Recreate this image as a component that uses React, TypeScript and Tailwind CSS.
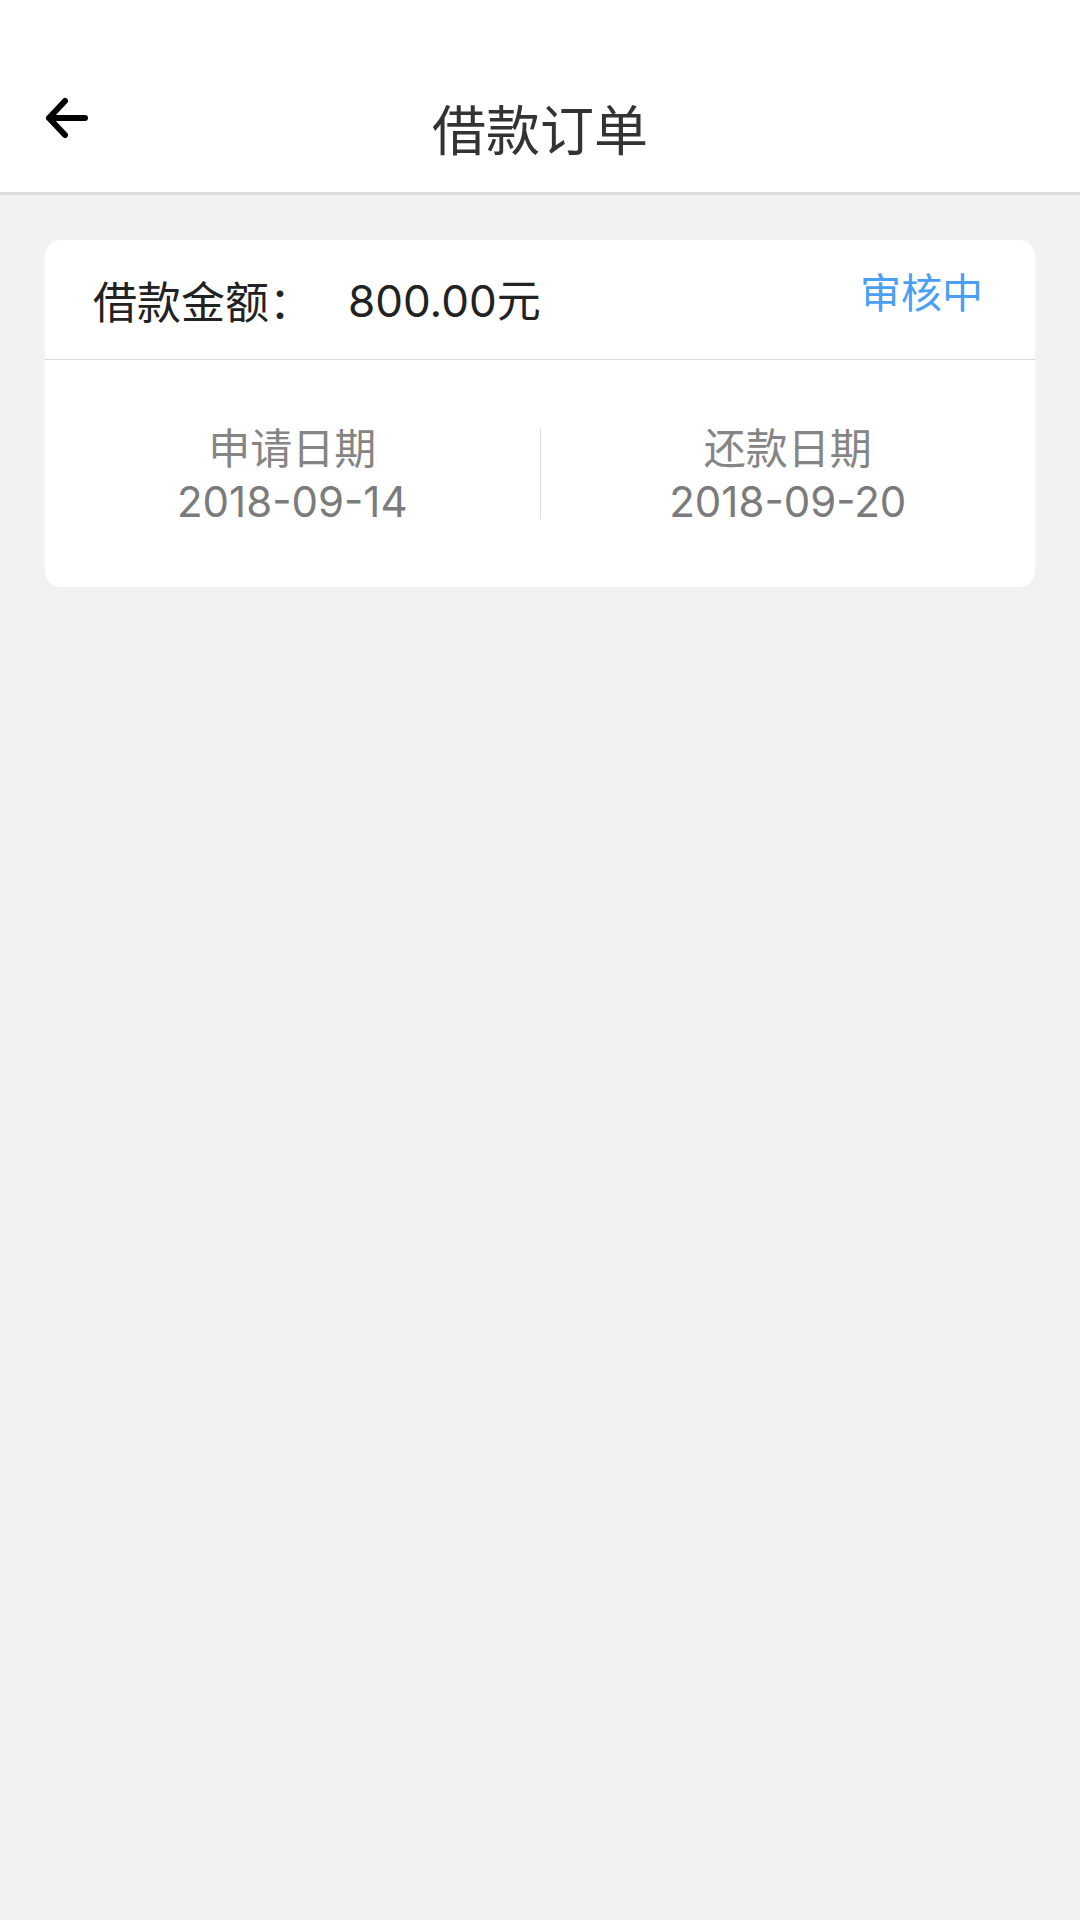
import React from "react";

const font = { fontFamily: '"Noto Sans CJK SC", "Noto Sans", sans-serif' };
const num = { fontFamily: 'Inter, "Noto Sans CJK SC", sans-serif' };

export default function App() {
  return (
    <div className="min-h-[1920px] w-[1080px] bg-[#f2f2f2]" style={font}>
      <header className="h-[195px] bg-white border-b-[3px] border-[#dedede] pt-[64px]">
        <div className="grid h-[128px] grid-cols-[1fr_auto_1fr] items-center">
          <div className="self-start pl-[45px] pt-[32px]">
            <svg width="44" height="44" viewBox="0 0 44 44" fill="none">
              <path
                d="M20 5 L4 22 L20 39 M4 22 L40 22"
                stroke="#000"
                strokeWidth="6"
                strokeLinecap="round"
                strokeLinejoin="round"
              />
            </svg>
          </div>
          <h1 className="text-[54px] leading-none font-normal text-[#333333]">借款订单</h1>
          <div />
        </div>
      </header>

      <div className="mx-[45px] mt-[45px] overflow-hidden rounded-[16px] bg-white">
        <div className="flex h-[120px] items-center border-b border-[#d9d9d9] pl-[48px] pr-[52px]">
          <span className="text-[44px] leading-none text-[#222222]">借款金额：</span>
          <span className="ml-[35px] text-[44px] leading-none text-[#222222]">
            <span style={num}>800.00</span>元
          </span>
          <span className="ml-auto self-start mt-[30px] text-[41px] leading-none text-[#4a9ff5]">审核中</span>
        </div>
        <div className="flex h-[227px] items-center">
          <div className="flex flex-1 flex-col items-center gap-[14px]">
            <span className="text-[42px] leading-none text-[#858585]">申请日期</span>
            <span className="text-[42px] leading-none text-[#7b7b7b]" style={num}>2018-09-14</span>
          </div>
          <div className="h-[91px] w-px bg-[#dddddd]" />
          <div className="flex flex-1 flex-col items-center gap-[14px]">
            <span className="text-[42px] leading-none text-[#858585]">还款日期</span>
            <span className="text-[42px] leading-none text-[#7b7b7b]" style={num}>2018-09-20</span>
          </div>
        </div>
      </div>
    </div>
  );
}
